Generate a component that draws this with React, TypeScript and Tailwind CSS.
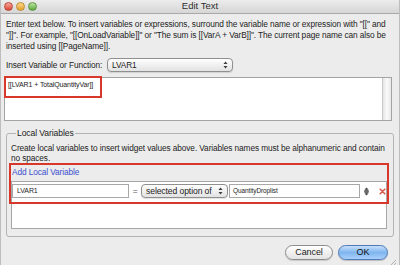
import React from "react";

function UpDown() {
  return (
    <svg width="5" height="8" viewBox="0 0 5 8" className="shrink-0">
      <path d="M2.5 0.5 L4.5 3 L0.5 3 Z" fill="#3a3a3a" />
      <path d="M2.5 7.5 L4.5 5 L0.5 5 Z" fill="#3a3a3a" />
    </svg>
  );
}

function Select({ label, className }: { label: string; className: string }) {
  return (
    <div
      className={`flex items-center justify-between rounded-[4px] border border-[#8f8f8f] bg-gradient-to-b from-white to-[#e2e2e2] pl-[4px] pr-[4px] shadow-[0_1px_1px_rgba(0,0,0,0.12)] ${className}`}
    >
      <span className="leading-none">{label}</span>
      <UpDown />
    </div>
  );
}

function TrafficLight({ from, to, ring }: { from: string; to: string; ring: string }) {
  return <div className={`h-[9px] w-[9px] rounded-full border bg-gradient-to-b ${from} ${to} ${ring}`} />;
}

export default function App() {
  return (
    <div className="flex h-[265px] w-[400px] flex-col overflow-hidden border-x border-[#bdbdbd] bg-[#ececec] font-['Liberation_Sans',Arial,sans-serif] text-[8.3px] tracking-[-0.1px] text-[#1c1c1c]">
      {/* title bar */}
      <div className="relative flex h-[14px] shrink-0 items-center border-b border-[#a9a9a9] bg-gradient-to-b from-[#ececec] to-[#d6d6d6] pl-[3px]">
        <div className="flex gap-[3px]">
          <TrafficLight from="from-[#f7a59c]" to="to-[#d8402f]" ring="border-[#b8463a]" />
          <TrafficLight from="from-[#fbd88c]" to="to-[#e3a01e]" ring="border-[#bf8a2a]" />
          <TrafficLight from="from-[#bfe6a0]" to="to-[#58a83a]" ring="border-[#5c9440]" />
        </div>
        <div className="absolute inset-0 flex items-center justify-center text-[9.5px] tracking-normal text-[#2e2e2e]">Edit Text</div>
      </div>

      <div className="flex flex-1 flex-col px-[3px]">
        <div className="pl-[2px] pt-[5px] leading-[11px] whitespace-nowrap">
          <div>Enter text below. To insert variables or expressions, surround the variable name or expression with "[[" and</div>
          <div>"]]". For example, "[[OnLoadVariable]]" or "The sum is [[VarA + VarB]]". The current page name can also be</div>
          <div>inserted using [[PageName]].</div>
        </div>

        <div className="mt-[6px] flex items-center pl-[2px]">
          <span className="w-[101px] whitespace-nowrap">Insert Variable or Function:</span>
          <Select label="LVAR1" className="h-[14px] w-[126px]" />
        </div>

        {/* text area */}
        <div className="relative mr-[4px] mt-[5px] flex h-[44px] border border-[#a3a3a3] bg-white">
          <div className="flex-1 pl-[3px] pt-[2px] text-[7px] leading-[10px]">[[LVAR1 + TotalQuantityVar]]</div>
          <div className="w-[9px] border-l border-[#c9c9c9] bg-gradient-to-r from-[#e4e4e4] via-[#fafafa] to-[#e7e7e7]" />
          <div className="absolute -left-[1px] -top-[2px] h-[22px] w-[98px] border-2 border-[#d8382a]" />
        </div>

        {/* local variables group */}
        <fieldset className="mx-[2px] mt-[7px] rounded-[3px] border border-[#b3b3b3] pb-[7px] pl-[4px] pr-[6px]">
          <legend className="ml-[5px] px-[1px] text-[8.6px] leading-[10px]">Local Variables</legend>
          <div className="relative">
            <div className="pt-[5px] leading-[10px] whitespace-nowrap">
              <div>Create local variables to insert widget values above. Variables names must be alphanumeric and contain</div>
              <div>no spaces.</div>
            </div>
            <div className="mt-[4px] pl-[1px] leading-[10px] text-[#3b4fd0]">Add Local Variable</div>
            <div className="mt-[4px] h-[48px] border border-[#a7a7a7] bg-white pt-[2px]">
              <div className="flex items-center">
                <div className="flex h-[14px] w-[117px] items-center border border-[#a8a8a8] bg-white pl-[4px] text-[7px]">LVAR1</div>
                <span className="w-[12px] text-center text-[#555]">=</span>
                <Select label="selected option of" className="h-[14px] w-[87px] text-[8.6px]" />
                <div className="ml-[1px] flex h-[14px] w-[131px] items-center border border-[#a8a8a8] bg-white pl-[3px] text-[6.5px]">QuantityDroplist</div>
                <div className="ml-[3px] flex h-[9px] w-[7px] items-center justify-center">
                  <svg width="7" height="9" viewBox="0 0 7 9">
                    <circle cx="3.5" cy="4.5" r="2.4" fill="#6a6a6a" />
                    <path d="M3.5 0.5 L5.4 2.6 L1.6 2.6 Z" fill="#4a4a4a" />
                    <path d="M3.5 8.5 L5.4 6.4 L1.6 6.4 Z" fill="#4a4a4a" />
                  </svg>
                </div>
                <div className="ml-[9px] flex items-center">
                  <svg width="7" height="7" viewBox="0 0 7 7">
                    <path d="M1.2 1.2 L5.8 5.8 M5.8 1.2 L1.2 5.8" stroke="#d65a4d" strokeWidth="1.6" strokeLinecap="round" />
                  </svg>
                </div>
              </div>
            </div>
            <div className="absolute -left-[2px] -right-[2px] top-[25px] h-[41px] border-2 border-[#d8382a]" />
          </div>
        </fieldset>

        {/* buttons */}
        <div className="relative mt-[8px] flex justify-end gap-[5px] pr-[8px]">
          <button className="flex h-[15px] w-[48px] items-center justify-center rounded-full border border-[#8c8c8c] bg-gradient-to-b from-white to-[#e3e3e3] text-[9px] text-[#222] shadow-[0_1px_1px_rgba(0,0,0,0.15)]">
            Cancel
          </button>
          <button className="flex h-[15px] w-[50px] items-center justify-center rounded-full border border-[#4f79b8] bg-gradient-to-b from-[#c8e0fb] via-[#7fb5ee] to-[#a9d1fb] text-[9px] text-[#111] shadow-[0_1px_1px_rgba(0,0,0,0.2)]">
            OK
          </button>
          <svg width="7" height="7" viewBox="0 0 7 7" className="absolute bottom-[-6px] right-[0px]">
            <path d="M1 7 L7 1 M4 7 L7 4" stroke="#a5a5a5" strokeWidth="0.8" />
          </svg>
        </div>
      </div>
    </div>
  );
}
